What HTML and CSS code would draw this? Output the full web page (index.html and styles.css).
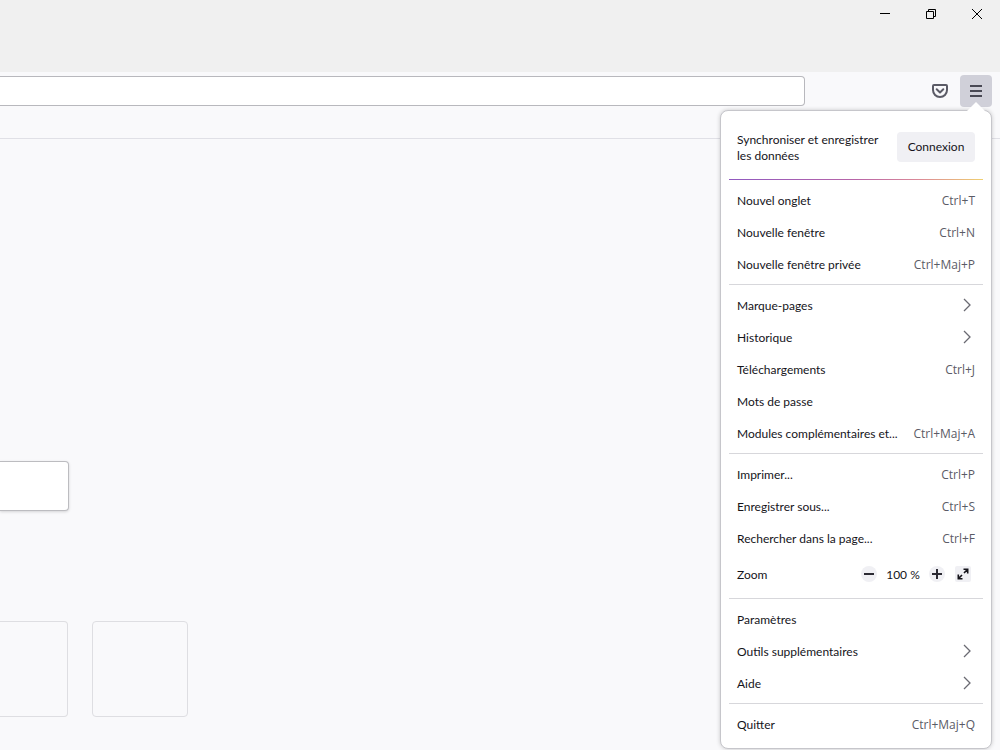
FILE: index.html
```html
<!DOCTYPE html>
<html lang="fr">
<head>
<meta charset="utf-8">
<title>Nouvel onglet</title>
<link rel="stylesheet" href="styles.css">
</head>
<body>
<header class="titlebar">
  <button class="window-button" aria-label="Réduire"><svg width="12" height="12" viewBox="0 0 12 12"><path d="M1 5.5h10" stroke="#000"/></svg></button>
  <button class="window-button" aria-label="Restaurer"><svg width="12" height="12" viewBox="0 0 12 12" fill="none" stroke="#000"><path d="M1.500 3.500h7v7h-7zM3.500 3.500v-2h7v7h-2"/></svg></button>
  <button class="window-button" aria-label="Fermer"><svg width="12" height="12" viewBox="0 0 12 12"><path d="M1 1l10 10M11 1L1 11" stroke="#000"/></svg></button>
</header>
<nav class="toolbar">
  <input class="address" type="text" aria-label="Adresse">
  <div class="tools">
    <button class="tool" aria-label="Pocket"><svg width="18" height="16" viewBox="0 0 18 16" fill="none" stroke="#5b5b66" stroke-width="2" stroke-linecap="round" stroke-linejoin="round"><path d="M3 2h12q1 0 1 1v4a7 7 0 0 1-14 0V3q0-1 1-1z"/><path d="M5.700 6.300L9 9.400l3.300-3.100"/></svg></button>
    <button class="tool tool-open" aria-label="Menu" aria-expanded="true"><svg width="14" height="14" viewBox="0 0 14 14"><path d="M1 2h12M1 7h12M1 12h12" stroke="#4a4a55" stroke-width="2"/></svg></button>
  </div>
</nav>
<main class="page">
  <input class="search" type="text" aria-label="Rechercher">
  <div class="tiles"><div class="tile tile-cut"></div><div class="tile"></div></div>
</main>
<aside class="menu">
  <svg class="arrow" width="20" height="10" viewBox="0 0 20 10"><path d="M0 10L10 0l10 10z" fill="#fff"/></svg>
  <div class="account"><p class="account-text">Synchroniser et enregistrer les données</p><button class="sign-in">Connexion</button></div>
  <div class="rainbow"></div>
  <button class="item">Nouvel onglet<span class="key">Ctrl+T</span></button>
  <button class="item">Nouvelle fenêtre<span class="key">Ctrl+N</span></button>
  <button class="item">Nouvelle fenêtre privée<span class="key">Ctrl+Maj+P</span></button>
  <hr class="line">
  <button class="item submenu">Marque-pages<svg class="chevron" width="8" height="14" viewBox="0 0 8 14"><path d="M1 0l6 6-6 6"/></svg></button>
  <button class="item submenu">Historique<svg class="chevron" width="8" height="14" viewBox="0 0 8 14"><path d="M1 0l6 6-6 6"/></svg></button>
  <button class="item">Téléchargements<span class="key">Ctrl+J</span></button>
  <button class="item">Mots de passe</button>
  <button class="item">Modules complémentaires et...<span class="key">Ctrl+Maj+A</span></button>
  <hr class="line">
  <button class="item">Imprimer...<span class="key">Ctrl+P</span></button>
  <button class="item">Enregistrer sous...<span class="key">Ctrl+S</span></button>
  <button class="item">Rechercher dans la page...<span class="key">Ctrl+F</span></button>
  <div class="zoom">
    <span class="zoom-label">Zoom</span>
    <button class="round" aria-label="Zoom arrière"><svg width="10" height="10" viewBox="0 0 10 10"><path d="M0 5h10" stroke="#2b2a33" stroke-width="2"/></svg></button>
    <span class="percent">100 %</span>
    <button class="round" aria-label="Zoom avant"><svg width="10" height="10" viewBox="0 0 10 10"><path d="M0 5h10M5 0v10" stroke="#2b2a33" stroke-width="2"/></svg></button>
    <button class="round full" aria-label="Plein écran"><svg width="12" height="12" viewBox="0 0 12 12" fill="none" stroke="#15141a" stroke-width="1.600"><path d="M6.500 1.300h4.200v4.200M5.500 10.700H1.300V6.500M1.500 10.500l3.500-3.500M7 5l3.500-3.500"/></svg></button>
  </div>
  <hr class="line">
  <button class="item">Paramètres</button>
  <button class="item submenu">Outils supplémentaires<svg class="chevron" width="8" height="14" viewBox="0 0 8 14"><path d="M1 0l6 6-6 6"/></svg></button>
  <button class="item submenu">Aide<svg class="chevron" width="8" height="14" viewBox="0 0 8 14"><path d="M1 0l6 6-6 6"/></svg></button>
  <hr class="line">
  <button class="item">Quitter<span class="key">Ctrl+Maj+Q</span></button>
</aside>
</body>
</html>
```
FILE: styles.css
```css
* { box-sizing: border-box; }
body {
  margin: 0;
  min-height: 100vh;
  position: relative;
  background: #f9f9fb;
  color: #15141a;
  font: 12px/16px Lato, "Open Sans", sans-serif;
}
button {
  margin: 0;
  padding: 0;
  border: 0;
  background: none;
  color: inherit;
  font: inherit;
}
svg {
  display: block;
  overflow: visible;
}
.titlebar {
  display: flex;
  justify-content: flex-end;
  height: 72px;
  background: #f0f0f0;
}
.window-button {
  display: grid;
  place-items: center;
  width: 46px;
  height: 28px;
}
.toolbar {
  display: flex;
  align-items: flex-start;
  justify-content: space-between;
  height: 67px;
  padding: 3px 8px 0 0;
  border-bottom: 1px solid #e0e0e6;
}
.address {
  flex: 1;
  height: 30px;
  margin: 1px 0 0;
  padding: 0 12px;
  border: 1px solid #b8b8bd;
  border-left: 0;
  border-radius: 0 4px 4px 0;
  background: #fff;
}
.tools {
  display: flex;
  gap: 4px;
  margin-left: 119px;
}
.tool {
  display: grid;
  place-items: center;
  width: 32px;
  height: 32px;
  border-radius: 4px;
}
.tool-open { background: #d0d0d9; }
.page { padding-top: 322px; }
.search {
  display: block;
  width: 69px;
  height: 50px;
  border: 1px solid #bcbcc0;
  border-left: 0;
  border-radius: 0 4px 4px 0;
  background: #fff;
  box-shadow: 0 1px 3px rgba(0, 0, 0, 0.15);
}
.tiles {
  display: flex;
  gap: 24px;
  margin-top: 110px;
}
.tile {
  width: 96px;
  height: 96px;
  border: 1px solid #dedee2;
  border-radius: 4px;
}
.tile-cut {
  width: 68px;
  border-left: 0;
  border-radius: 0 4px 4px 0;
}
.menu {
  position: absolute;
  top: 110px;
  right: 8px;
  width: 272px;
  padding: 8px;
  border: 1px solid #c6c6cb;
  border-radius: 8px;
  background: #fff;
  box-shadow: 0 0 4px rgba(0, 0, 0, 0.2);
}
.arrow {
  position: absolute;
  top: -9px;
  right: 5px;
}
.account {
  display: flex;
  align-items: center;
  justify-content: space-between;
  height: 56px;
  padding: 0 8px;
}
.account-text {
  width: 152px;
  margin: 0;
  padding-top: 2px;
}
.sign-in {
  width: 78px;
  height: 30px;
  border-radius: 4px;
  background: #f0f0f4;
}
.rainbow {
  height: 1px;
  margin: 4px 0;
  background: linear-gradient(90deg, #9059c0, #b865a8 50%, #dc8a98 75%, #f0d070);
}
.item {
  display: flex;
  align-items: center;
  justify-content: space-between;
  width: 100%;
  height: 32px;
  padding: 2px 8px 0;
  white-space: nowrap;
  text-align: left;
}
.key {
  color: #5b5b66;
  font-family: "Open Sans", sans-serif;
}
.chevron {
  margin-right: 4px;
  fill: none;
  stroke: #6a6a72;
  stroke-width: 1.3;
}
.line {
  height: 1px;
  margin: 4px 0;
  border: 0;
  background: #d7d7db;
}
.zoom {
  display: flex;
  align-items: center;
  height: 40px;
  padding: 0 12px 0 8px;
}
.zoom-label {
  flex: 1;
  padding-top: 2px;
}
.percent {
  width: 52px;
  padding-top: 2px;
  text-align: center;
}
.round {
  display: grid;
  place-items: center;
  width: 16px;
  height: 16px;
  border-radius: 8px;
  background: #f0f0f4;
}
.full {
  margin-left: 10px;
  border-radius: 2px;
}
```
